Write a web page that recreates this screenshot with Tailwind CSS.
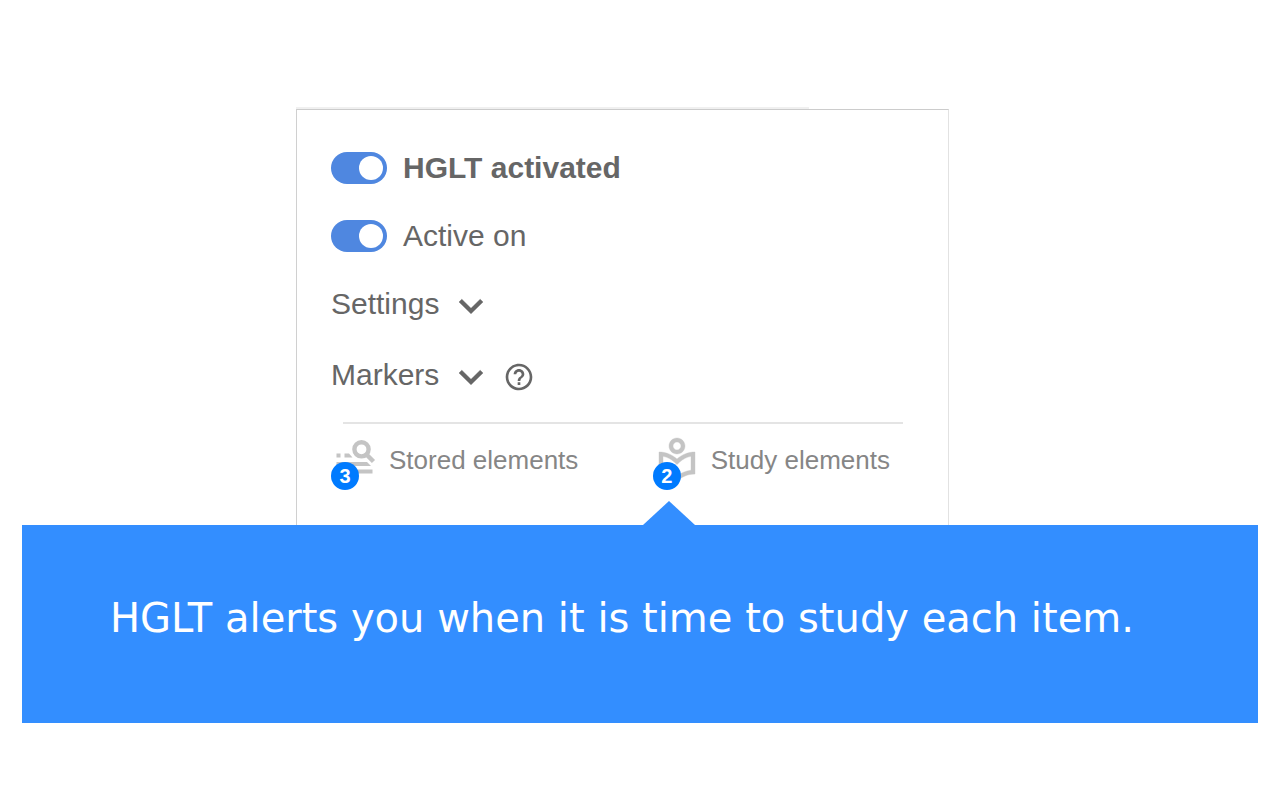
<!DOCTYPE html>
<html lang="en">
<head>
<meta charset="utf-8">
<meta name="viewport" content="width=device-width, initial-scale=1">
<title>HGLT</title>
<script src="https://cdn.jsdelivr.net/npm/@tailwindcss/browser@4"></script>
</head>
<body class="bg-white font-['Liberation_Sans',Arial,sans-serif]">
<main class="px-[22px] pt-[107px] pb-19">
  <div class="ml-[274px] h-0.5 max-w-[513px] bg-[#f0f0f0]"></div>
  <section class="ml-[274px] max-w-[653px] border border-b-0 border-t-[#cccccc] border-l-[#d0d0d0] border-r-[#e2e2e2] pt-[42px] pr-[45px] pl-[34px] pb-[41px] text-[30px] leading-8 text-[#666666]">
    <label class="flex items-center gap-4 font-bold">
      <input type="checkbox" checked class="h-8 w-14 shrink-0 appearance-none rounded-full bg-gray-300 p-1 before:block before:size-6 before:rounded-full before:bg-white checked:bg-[#4f87e0] checked:before:ml-6">
      HGLT activated
    </label>
    <label class="mt-9 flex items-center gap-4">
      <input type="checkbox" checked class="h-8 w-14 shrink-0 appearance-none rounded-full bg-gray-300 p-1 before:block before:size-6 before:rounded-full before:bg-white checked:bg-[#4f87e0] checked:before:ml-6">
      Active on
    </label>
    <button type="button" class="mt-9 flex items-center gap-5">
      Settings
      <svg class="mt-1 h-4 w-6" viewBox="6 8 12 8" fill="currentColor" stroke="currentColor" stroke-width="0.2" aria-hidden="true"><path d="M16.590 8.590 12 13.170 7.410 8.590 6 10l6 5.900 6-5.900z"/></svg>
    </button>
    <div class="mt-[37px] flex items-center gap-5">
      <button type="button" class="flex items-center gap-5">
        Markers
        <svg class="mt-1 h-4 w-6" viewBox="6 8 12 8" fill="currentColor" stroke="currentColor" stroke-width="0.2" aria-hidden="true"><path d="M16.590 8.590 12 13.170 7.410 8.590 6 10l6 5.900 6-5.900z"/></svg>
      </button>
      <button type="button" aria-label="Help" class="mt-1">
        <svg class="size-8" viewBox="0 0 24 24" fill="currentColor" aria-hidden="true"><path d="M11 18h2v-2h-2v2zm1-16C6.480 2 2 6.480 2 12s4.480 10 10 10 10-4.480 10-10S17.520 2 12 2zm0 18c-4.410 0-8-3.590-8-8s3.590-8 8-8 8 3.590 8 8-3.590 8-8 8zm0-14c-2.210 0-4 1.790-4 4h2c0-1.100.9-2 2-2s2 .9 2 2c0 2-3 1.750-3 5h2c0-2.250 3-2.500 3-5 0-2.210-1.790-4-4-4z"/></svg>
      </button>
    </div>
    <hr class="mt-[29px] mb-3 ml-3 border-t-2 border-[#e4e4e4]">
    <div class="flex justify-between pr-[13px] text-[26px] text-[#868686]">
      <button type="button" class="relative flex items-center gap-[10px]">
        <svg class="size-12 text-[#c4c4c4]" viewBox="0 0 48 48" fill="currentColor" aria-hidden="true">
          <circle cx="30.500" cy="13.300" r="7.100" fill="none" stroke="currentColor" stroke-width="4.400"/>
          <path d="m35.500 18.500 7 7" fill="none" stroke="currentColor" stroke-width="4.500"/>
          <path d="M5.500 17.500h4v4h-4zM13.500 17.500h4.500l3.500 4h-8zM5.500 26h30.500l4 4H5.500zM5.500 33.500h36v4h-36z"/>
        </svg>
        Stored elements
        <span class="absolute top-[26px] left-0 flex size-7 items-center justify-center rounded-full bg-[#007bff] text-xl font-bold text-white">3</span>
      </button>
      <button type="button" class="relative flex items-center gap-[10px]">
        <svg class="size-12 text-[#c4c4c4]" viewBox="0 0 24 24" fill="currentColor" stroke="currentColor" stroke-width="0.200" aria-hidden="true"><path fill-rule="evenodd" d="M16 5c0-2.210-1.790-4-4-4S8 2.790 8 5s1.790 4 4 4 4-1.790 4-4zm-6 0c0-1.100.9-2 2-2s2 .9 2 2-.9 2-2 2-2-.9-2-2zM12 11.550C9.640 9.350 6.480 8 3 8v11c3.480 0 6.640 1.350 9 3.550 2.360-2.190 5.520-3.550 9-3.550V8c-3.480 0-6.640 1.350-9 3.550zM19 17.130c-2.530.34-4.930 1.300-7 2.820-2.060-1.520-4.470-2.490-7-2.830v-6.950c2.100.38 4.050 1.350 5.640 2.830L12 14.280l1.360-1.270c1.590-1.480 3.540-2.450 5.640-2.830v6.950z"/></svg>
        Study elements
        <span class="absolute top-[26px] left-0 flex size-7 items-center justify-center rounded-full bg-[#007bff] text-xl font-bold text-white">2</span>
      </button>
    </div>
  </section>
  <section class="relative bg-[#338eff] px-[88px] pt-[69px] pb-[81px] font-['DejaVu_Sans',sans-serif] text-[40px] leading-12 text-white">
    <svg class="absolute bottom-full left-[621px] h-6 w-[52px]" viewBox="0 0 52 24" fill="#338eff" aria-hidden="true"><path d="M0 24 26 0l26 24z"/></svg>
    <p>HGLT alerts you when it is time to study each item.</p>
  </section>
</main>
</body>
</html>
